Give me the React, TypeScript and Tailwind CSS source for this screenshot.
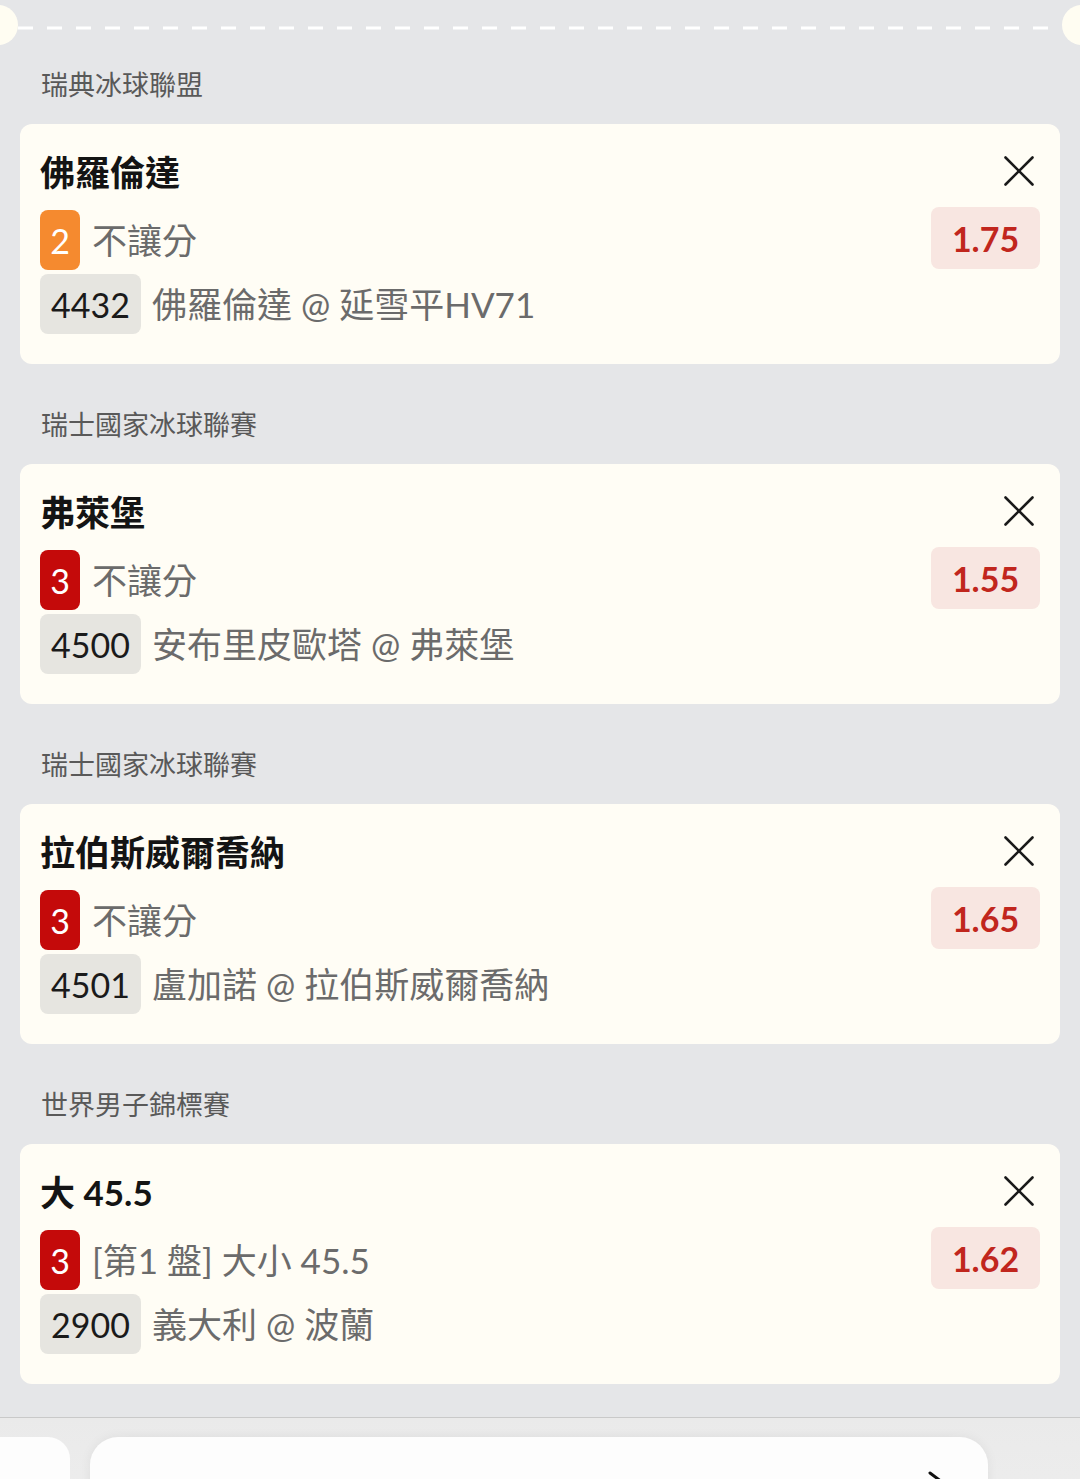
type Bet = {
  league: string;
  title: string;
  leg: number;
  legColor: string;
  market: string;
  code: string;
  match: string;
  odds: string;
};

const bets: Bet[] = [
  { league: "瑞典冰球聯盟", title: "佛羅倫達", leg: 2, legColor: "bg-[#f58a2f]", market: "不讓分", code: "4432", match: "佛羅倫達 @ 延雪平HV71", odds: "1.75" },
  { league: "瑞士國家冰球聯賽", title: "弗萊堡", leg: 3, legColor: "bg-[#c40a0a]", market: "不讓分", code: "4500", match: "安布里皮歐塔 @ 弗萊堡", odds: "1.55" },
  { league: "瑞士國家冰球聯賽", title: "拉伯斯威爾喬納", leg: 3, legColor: "bg-[#c40a0a]", market: "不讓分", code: "4501", match: "盧加諾 @ 拉伯斯威爾喬納", odds: "1.65" },
  { league: "世界男子錦標賽", title: "大 45.5", leg: 3, legColor: "bg-[#c40a0a]", market: "[第1 盤] 大小 45.5", code: "2900", match: "義大利 @ 波蘭", odds: "1.62" },
];

function CloseIcon() {
  return (
    <svg width="30" height="30" viewBox="0 0 30 30" fill="none" stroke="#1a1a1a" strokeWidth="2.6" strokeLinecap="round">
      <path d="M1.5 1.5 28.5 28.5" />
      <path d="M28.5 1.5 1.5 28.5" />
    </svg>
  );
}

function BetCard({ bet }: { bet: Bet }) {
  return (
    <div className="mx-[20px] flex justify-between rounded-[12px] bg-[#fffdf5] pl-[20px] pr-[20px] pt-[26px] pb-[30px]">
      <div className="flex flex-col">
        <h3 className="h-[44px] text-[35px] leading-[44px] font-bold text-[#141414]">{bet.title}</h3>
        <div className="mt-[16px] flex items-center">
          <span className={`${bet.legColor} flex h-[60px] w-[40px] items-center justify-center rounded-[8px] text-[34px] text-white`}>
            {bet.leg}
          </span>
          <span className="ml-[12px] text-[35px] text-[#6b6b6b]">{bet.market}</span>
        </div>
        <div className="mt-[4px] flex items-center">
          <span className="flex h-[60px] w-[101px] items-center justify-center rounded-[8px] bg-[#e6e5e0] text-[34px] text-[#1a1a1a]">
            {bet.code}
          </span>
          <span className="ml-[11px] text-[35px] text-[#6b6b6b]">{bet.match}</span>
        </div>
      </div>
      <div className="flex flex-col items-end">
        <button className="mt-[6px] mr-[6px]">
          <CloseIcon />
        </button>
        <div className="mt-[21px] flex h-[62px] w-[109px] items-center justify-center rounded-[8px] bg-[#f8e6e1] text-[34px] font-bold text-[#c1261d]">
          {bet.odds}
        </div>
      </div>
    </div>
  );
}

export default function App() {
  return (
    <div
      className="relative h-[1479px] w-[1080px] overflow-hidden bg-[#e5e6e8]"
      style={{ fontFamily: "Lato, 'Noto Sans CJK TC', sans-serif" }}
    >
      {/* ticket perforation */}
      <div className="relative h-[50px]">
        <div className="absolute left-[-22px] top-[5px] h-[40px] w-[40px] rounded-full bg-[#fffdf2]" />
        <div className="absolute right-[-22px] top-[5px] h-[40px] w-[40px] rounded-full bg-[#fffdf2]" />
        <svg className="absolute left-[18px] top-[26px]" width="1044" height="4">
          <line x1="0" y1="2" x2="1044" y2="2" stroke="#ffffff" strokeWidth="3" strokeDasharray="15 14" />
        </svg>
      </div>

      {bets.map((bet, i) => (
        <div key={i} className={i === 0 ? "mt-[18px]" : "mt-[44px]"}>
          <div className="h-[34px] pl-[41px] text-[27px] leading-[34px] text-[#595959]">{bet.league}</div>
          <div className="mt-[22px]">
            <BetCard bet={bet} />
          </div>
        </div>
      ))}

      {/* bottom action bar */}
      <div className="mt-[33px] h-[200px] border-t border-[#c9c9c9] bg-gradient-to-b from-[#eaeaea] to-[#f1f1f1] pt-[19px]">
        <div className="flex gap-[20px]">
          <div className="h-[120px] w-[70px] rounded-tr-[22px] bg-[#fdfdfd]" />
          <div className="relative h-[120px] w-[898px] rounded-[28px] bg-[#fdfdfd] shadow-[0_0_12px_rgba(0,0,0,0.06)]">
            <svg className="absolute left-[834px] top-[32px]" width="20" height="20" viewBox="0 0 20 20" fill="none" stroke="#111" strokeWidth="3" strokeLinecap="round">
              <path d="M6 4 14 10 6 16" />
            </svg>
          </div>
        </div>
      </div>
    </div>
  );
}
